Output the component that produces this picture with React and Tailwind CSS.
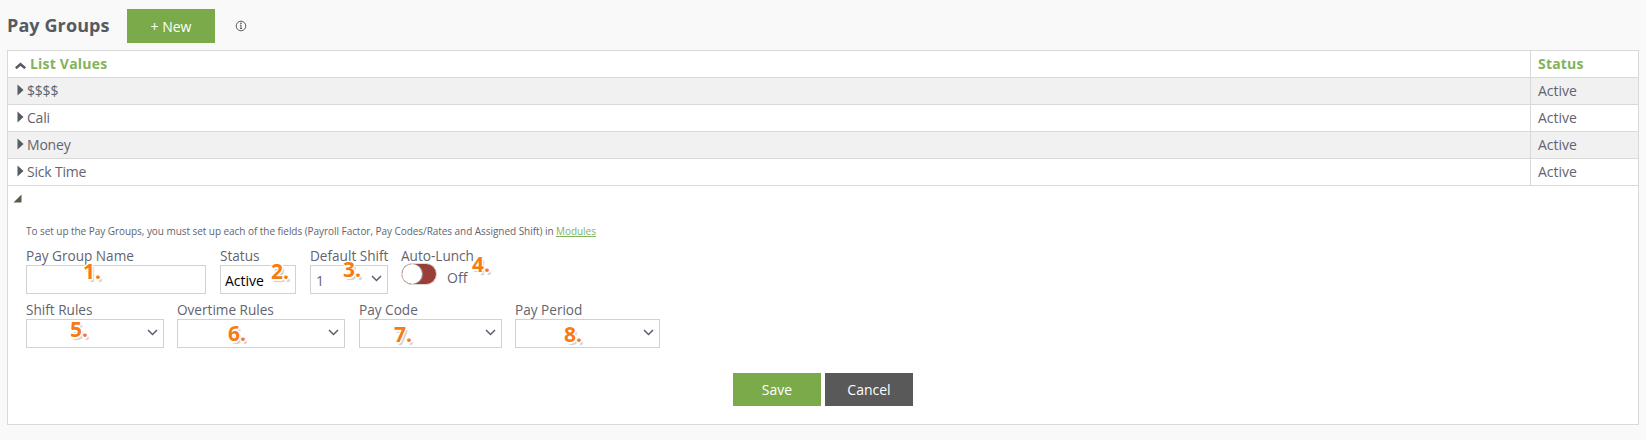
const font = { fontFamily: '"Open Sans", sans-serif' };

function Chevron() {
  return (
    <svg className="absolute right-[5px] top-[9px] text-[#5a5f6b]" width="11" height="7" viewBox="0 0 11 7" fill="none">
      <path d="M1 1l4.5 4.5L10 1" stroke="currentColor" strokeWidth="1.5" />
    </svg>
  );
}

function Marker({ children, className }) {
  return (
    <span
      className={`absolute text-[21px] leading-none font-bold text-[#f57c14] [text-shadow:1px_1px_0_#fff,-1px_-1px_0_#fff,1px_-1px_0_#fff,-1px_1px_0_#fff,0_2px_0_#fff,2px_3px_1px_#ccc] ${className}`}
    >
      {children}
    </span>
  );
}

function Field({ label, width, children, marker, markerClass, chevron = true, mr = "mr-[13px]" }) {
  return (
    <div className={`relative ${mr}`} style={{ width }}>
      <div className="h-[19px] text-[13.6px] leading-[19px] whitespace-nowrap text-[#5f6470]">{label}</div>
      <div className="relative h-[29px] border border-[#d2d2d2] bg-white text-[14px] leading-[29px]">
        {children}
        {chevron && <Chevron />}
      </div>
      <Marker className={markerClass}>{marker}</Marker>
    </div>
  );
}

function Row({ name, shaded }) {
  return (
    <div className={`flex h-[27px] border-b border-[#d9d9d9] text-[14px] text-[#5f6470] ${shaded ? "bg-[#f1f1f1]" : "bg-white"}`}>
      <div className="flex flex-1 items-center pl-[9px]">
        <svg width="7" height="12" viewBox="0 0 7 12" className="mr-[3px] mb-[3px]">
          <path d="M0.5 0.5L6.5 6L0.5 11.5Z" fill="#555a63" />
        </svg>
        <span className="leading-[26px] tracking-[-0.2px]">{name}</span>
      </div>
      <div className="flex w-[108px] items-center border-l border-[#d9d9d9] pl-[7px] leading-[26px]">Active</div>
    </div>
  );
}

export default function App() {
  return (
    <div style={font} className="h-[440px] w-[1646px] overflow-hidden bg-[#f9f9f9]">
      <div className="flex h-[50px] items-start pl-[7px]">
        <h1 className="mt-[12px] w-[120px] text-[18px] leading-[26px] font-bold tracking-[0.1px] text-[#555a63]">Pay Groups</h1>
        <button className="mt-[9px] h-[34px] w-[88px] bg-[#7aaa4a] text-[14px] text-white">+ New</button>
        <svg className="mt-[20px] ml-[20px]" width="12" height="12" viewBox="0 0 12 12" fill="none">
          <circle cx="6" cy="6" r="4.8" stroke="#555a63" strokeWidth="1" />
          <path d="M6 5.2v3.2M4.9 8.5h2.2M5 5.2h1" stroke="#555a63" strokeWidth="1" />
          <circle cx="6" cy="3.4" r="0.8" fill="#555a63" />
        </svg>
      </div>

      <div className="mx-[7px] h-[375px] w-[1632px] border border-[#d9d9d9] bg-white">
        <div className="flex h-[27px] border-b border-[#d9d9d9] text-[14px] font-bold tracking-[0.2px] text-[#82b35a]">
          <div className="flex flex-1 items-center pl-[7px]">
            <svg width="11" height="7" viewBox="0 0 11 7" className="mr-[4px] mt-[3px]" fill="none">
              <path d="M0.8 6.2L5.5 2.2L10.2 6.2" stroke="#555a63" strokeWidth="2.6" />
            </svg>
            <span className="leading-[26px]">List Values</span>
          </div>
          <div className="flex w-[108px] items-center border-l border-[#d9d9d9] pl-[7px] leading-[26px]">Status</div>
        </div>
        <Row name="$$$$" shaded />
        <Row name="Cali" />
        <Row name="Money" shaded />
        <Row name="Sick Time" />

        <div className="pl-[5px] pt-[8px]">
          <svg width="9" height="9" viewBox="0 0 9 9" className="block">
            <path d="M0.5 8.5H8.5V0.5Z" fill="#5e584e" />
          </svg>
        </div>

        <div className="pl-[18px]">
          <p className="mt-[21px] h-[15px] text-[10px] leading-[15px] tracking-[-0.05px] text-[#5f6470]">
            To set up the Pay Groups, you must set up each of the fields (Payroll Factor, Pay Codes/Rates and Assigned Shift) in{" "}
            <a className="text-[#82b35a] underline">Modules</a>
          </p>

          <div className="mt-[7px] flex h-[48px]">
            <Field label="Pay Group Name" width="180px" marker="1." markerClass="left-[57px] top-[15px]" chevron={false} mr="mr-[14px]" />
            <Field label="Status" width="76px" marker="2." markerClass="left-[51px] top-[15px]" chevron={false} mr="mr-[14px]">
              <span className="pl-[4px] text-black">Active</span>
            </Field>
            <Field label="Default Shift" width="78px" marker="3." markerClass="left-[33px] top-[13px]">
              <span className="pl-[5px] text-[#5f6470]">1</span>
            </Field>
            <div className="relative flex-1">
              <div className="h-[19px] text-[13.6px] leading-[19px] whitespace-nowrap text-[#5f6470]">Auto-Lunch</div>
              <div className="-mt-[2px] flex items-start">
                <div className="h-[22px] w-[36px] overflow-hidden rounded-full border border-[#d9d9d9] bg-[#9a3f37]">
                  <div className="h-[20px] w-[20px] rounded-full bg-white shadow-[1px_0_1px_#999]" />
                </div>
                <span className="ml-[10px] mt-[5px] text-[14px] leading-[19px] text-[#5f6470]">Off</span>
              </div>
              <Marker className="left-[71px] top-[8px]">4.</Marker>
            </div>
          </div>

          <div className="mt-[6px] flex h-[48px]">
            <Field label="Shift Rules" width="138px" marker="5." markerClass="left-[44px] top-[19px]" />
            <Field label="Overtime Rules" width="168px" marker="6." markerClass="left-[51px] top-[23px]" mr="mr-[14px]" />
            <Field label="Pay Code" width="143px" marker="7." markerClass="left-[35px] top-[24px]" />
            <Field label="Pay Period" width="145px" marker="8." markerClass="left-[49px] top-[24px]" />
          </div>
        </div>

        <div className="mt-[25px] flex justify-center gap-[4px]">
          <button className="h-[33px] w-[88px] bg-[#7aaa4a] text-[14px] text-white">Save</button>
          <button className="h-[33px] w-[88px] bg-[#595959] text-[14px] text-white">Cancel</button>
        </div>
      </div>
    </div>
  );
}
